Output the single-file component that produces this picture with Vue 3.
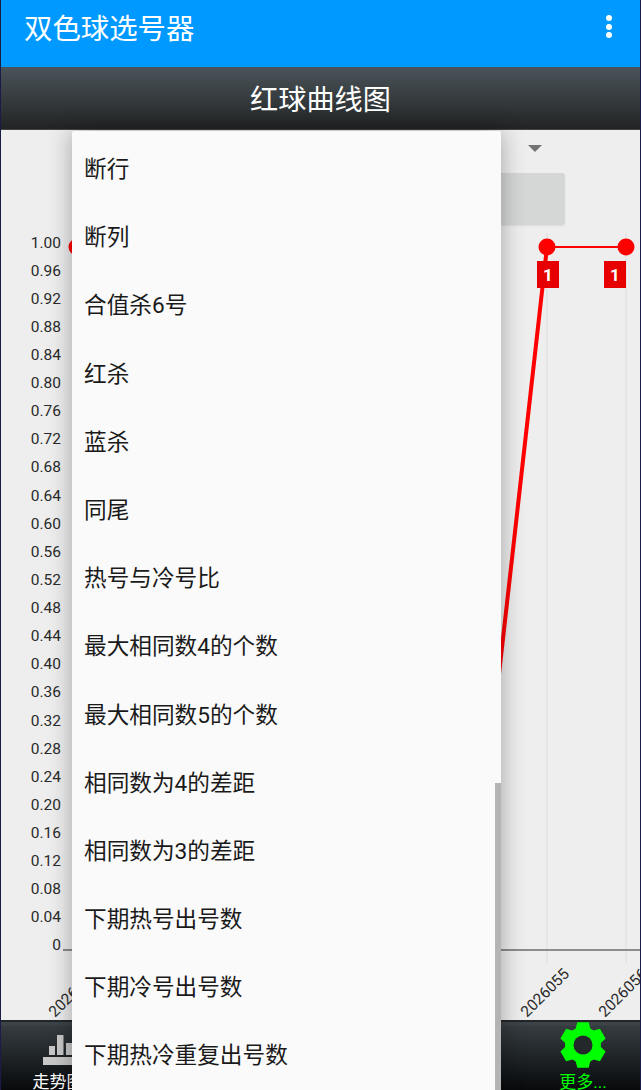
<script setup>
const items = ['断行','断列','合值杀6号','红杀','蓝杀','同尾','热号与冷号比','最大相同数4的个数','最大相同数5的个数','相同数为4的差距','相同数为3的差距','下期热号出号数','下期冷号出号数','下期热冷重复出号数','下期冷号重复出号数']
const yLabels = Array.from({ length: 25 }, (_, i) => {
  const v = 1 - i * 0.04
  return { text: v.toFixed(2), y: 247.5 + i * 28.12 }
})
const cx = 583, cy = 1044.5
const gear = (() => {
  const pts = []
  for (let i = 0; i < 6; i++) {
    const a = (i * 60 - 90) * Math.PI / 180
    const p = (r, d) => {
      const t = a + d * Math.PI / 180
      return (cx + r * Math.cos(t)).toFixed(1) + ',' + (cy + r * Math.sin(t)).toFixed(1)
    }
    pts.push(p(18, -24), p(23.5, -14), p(23.5, 14), p(18, 24))
  }
  return pts.join(' ')
})()
</script>

<template>
  <div class="phone">
    <header class="appbar">
      <h1 class="app-title">双色球选号器</h1>
      <div class="more"><i></i><i></i><i></i></div>
    </header>
    <div class="subbar">红球曲线图</div>
    <main class="content">
      <div class="spinner"><span class="caret"></span></div>
      <div class="action"></div>
      <svg class="chart" viewBox="0 225 639 795" preserveAspectRatio="none">
        <line x1="546" y1="233" x2="546" y2="963" class="grid" />
        <line x1="625" y1="233" x2="625" y2="963" class="grid" />
        <line x1="62" y1="950" x2="639" y2="950" class="axis" />
        <text v-for="l in yLabels" :key="l.text" x="60" :y="l.y" text-anchor="end" class="ylab">{{ l.text }}</text>
        <text x="60" y="950" text-anchor="end" class="ylab">0</text>
        <text transform="translate(54 1018) rotate(-45)" class="xlab">2026050</text>
        <text transform="translate(526 1018) rotate(-45)" class="xlab">2026055</text>
        <text transform="translate(604 1018) rotate(-45)" class="xlab">2026056</text>
        <polyline points="467,950 546,247" class="thick" />
        <line x1="546" y1="247" x2="625" y2="247" class="thin" />
        <circle cx="76" cy="247" r="8.5" fill="#ff0000" />
        <circle cx="546" cy="247" r="8.5" fill="#ff0000" />
        <circle cx="625" cy="247" r="8.5" fill="#ff0000" />
        <rect x="536" y="261" width="22" height="27" fill="#e60000" />
        <rect x="603" y="261" width="22" height="27" fill="#e60000" />
        <text x="547" y="281" text-anchor="middle" class="badge">1</text>
        <text x="614" y="281" text-anchor="middle" class="badge">1</text>
      </svg>
    </main>
    <nav class="tabs">
      <div class="tab first">
        <svg class="tab-icon bars" width="44" height="34" viewBox="0 0 44 34">
          <rect x="8" y="13" width="6" height="9" fill="#c8c8c8" />
          <rect x="16" y="2" width="6.5" height="20" fill="#c8c8c8" />
          <rect x="25" y="10" width="6" height="12" fill="#c8c8c8" />
          <rect x="2" y="24" width="40" height="8" fill="#c8c8c8" />
        </svg>
        <span>走势图</span>
      </div>
      <div class="tab active">
        <svg class="tab-icon" width="48" height="48" :viewBox="`${cx - 24} ${cy - 24} 48 48`">
          <polygon :points="gear" fill="#00ff00" />
          <circle :cx="cx" :cy="cy" r="9.5" fill="#23282b" />
        </svg>
        <span>更多...</span>
      </div>
    </nav>
    <div class="menu">
      <div v-for="it in items" :key="it" class="item">{{ it }}</div>
      <div class="thumb"></div>
    </div>
  </div>
</template>

<style>
html, body { margin: 0; padding: 0; }
</style>

<style scoped>
.phone {
  position: relative;
  width: 641px;
  height: 1090px;
  box-sizing: border-box;
  border-left: 1px solid #1b1b47;
  border-right: 1px solid #1b1b47;
  overflow: hidden;
  display: flex;
  flex-direction: column;
  font-family: Roboto, "Noto Sans CJK SC", sans-serif;
}
.appbar {
  height: 67px;
  flex: none;
  background: #0099ff;
  display: flex;
  align-items: flex-start;
  justify-content: space-between;
  padding: 0 28px 0 23px;
}
.app-title {
  margin: 9px 0 0;
  font-size: 28.4px;
  line-height: 42px;
  font-weight: 400;
  color: #fff;
}
.more {
  display: flex;
  flex-direction: column;
  gap: 2.5px;
  padding-top: 15px;
}
.more i {
  display: block;
  width: 6px;
  height: 6px;
  border-radius: 50%;
  background: #fff;
}
.subbar {
  height: 63px;
  flex: none;
  box-sizing: border-box;
  background: linear-gradient(#4a545a, #222424);
  border-bottom: 1px solid #454545;
  color: #fff;
  font-size: 28.2px;
  line-height: 68px;
  text-align: center;
}
.content {
  flex: 1;
  min-height: 0;
  display: flex;
  flex-direction: column;
  background: #eeeeee;
}
.spinner {
  height: 43px;
  flex: none;
  display: flex;
  justify-content: flex-end;
  padding: 15px 98px 0 0;
  box-sizing: border-box;
}
.caret {
  width: 0;
  height: 0;
  border-left: 7px solid transparent;
  border-right: 7px solid transparent;
  border-top: 7px solid #737373;
}
.action {
  height: 52px;
  flex: none;
  margin: 0 75px 0 120px;
  border-radius: 3px;
  background: #d5d7d7;
  box-shadow: 0 1px 2px rgba(0, 0, 0, 0.08);
}
.chart {
  flex: 1;
  min-height: 0;
  display: block;
  width: 100%;
}
.grid { stroke: #dddddd; stroke-width: 1; }
.axis { stroke: #8c8c8c; stroke-width: 2; }
.thick { stroke: #ff0000; stroke-width: 4; fill: none; }
.thin { stroke: #ff0000; stroke-width: 2; }
.ylab { font-size: 15.5px; fill: #2a2a2a; }
.xlab { font-size: 15.5px; fill: #2a2a2a; }
.badge { font-size: 17px; font-weight: 700; fill: #ffffff; }
.tabs {
  height: 70px;
  flex: none;
  box-sizing: border-box;
  border-top: 2px solid #222628;
  background: linear-gradient(#3c4448 0, #3c4448 3px, #353c40 4px, #080a0c 100%);
  display: flex;
  justify-content: space-between;
}
.tab {
  position: relative;
  width: 118px;
  display: flex;
  flex-direction: column;
  align-items: center;
  justify-content: flex-end;
  color: #ffffff;
  font-size: 17px;
  line-height: 20px;
}
.tab span { margin-bottom: -2px; }
.tab.first { left: -2px; }
.tab.active { color: #00ff00; left: 2px; }
.tab-icon { position: absolute; left: 50%; transform: translateX(-50%); bottom: 23px; }
.tab-icon.bars { transform: translateX(calc(-50% + 5px)); bottom: 23px; }
.tab.active .tab-icon { bottom: 21px; }
.menu {
  position: absolute;
  left: 71px;
  top: 131px;
  width: 429px;
  height: 959px;
  overflow: hidden;
  box-sizing: border-box;
  padding-top: 5px;
  background: #fafafa;
  border-radius: 2px 2px 0 0;
  box-shadow: 0 0 24px rgba(0, 0, 0, 0.32);
}
.item {
  height: 68.2px;
  line-height: 68px;
  padding-left: 12px;
  font-size: 22.65px;
  color: #1a1a1a;
}
.thumb {
  position: absolute;
  right: 0;
  top: 652px;
  bottom: 0;
  width: 6px;
  background: #b4b4b4;
}
</style>
